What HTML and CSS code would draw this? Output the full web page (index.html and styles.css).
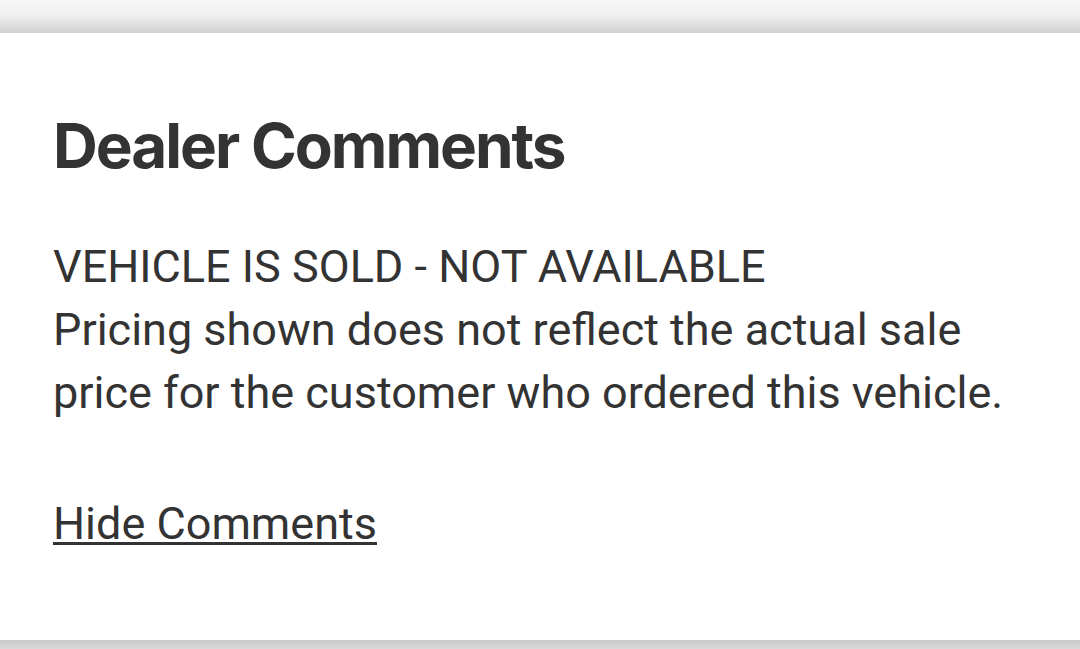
FILE: index.html
```html
<!DOCTYPE html>
<html lang="en">
<head>
  <meta charset="UTF-8" />
  <meta name="viewport" content="width=device-width, initial-scale=1.0"/>
  <title>Dealer Comments</title>
  <link rel="stylesheet" href="styles.css">
</head>
<body>
  <div class="top-shade"></div>
  <div class="card">
    <h2 class="title">Dealer Comments</h2>
    <p class="comments">
      VEHICLE IS SOLD - NOT AVAILABLE<br/>
      Pricing shown does not reflect the actual sale price for the customer who ordered this vehicle.
    </p>
    <a class="toggle" href="#">Hide Comments</a>
  </div>
  <div class="bottom-shade"></div>
</body>
</html>
```

FILE: styles.css
```css
body {
  margin: 0;
  background: #f7f7f7;
  font-family: Roboto, 'Noto Sans', sans-serif;
  color: #333;
  overflow: hidden;
}
.top-shade {
  height: 33px;
  background: linear-gradient(#f8f8f8 0%, #f1f1f1 40%, #d2d2d2 100%);
}
.card {
  background: #fff;
  height: 607px;
  box-sizing: border-box;
  padding: 0 53px;
  overflow: hidden;
}
.title {
  font-family: Inter, 'Open Sans', sans-serif;
  font-weight: 700;
  font-size: 62px;
  letter-spacing: -2px;
  line-height: 76px;
  margin: 0;
  padding-top: 75px;
  color: #333;
}
.comments {
  font-size: 45px;
  line-height: 63px;
  margin: 0;
  padding-top: 51px;
}
.toggle {
  display: inline-block;
  margin-top: 68px;
  font-size: 45px;
  line-height: 63px;
  color: #333;
  text-decoration-thickness: 3px;
  text-underline-offset: 3px;
}
.bottom-shade {
  height: 9px;
  background: linear-gradient(#c9c9c9, #dadada);
}
```
